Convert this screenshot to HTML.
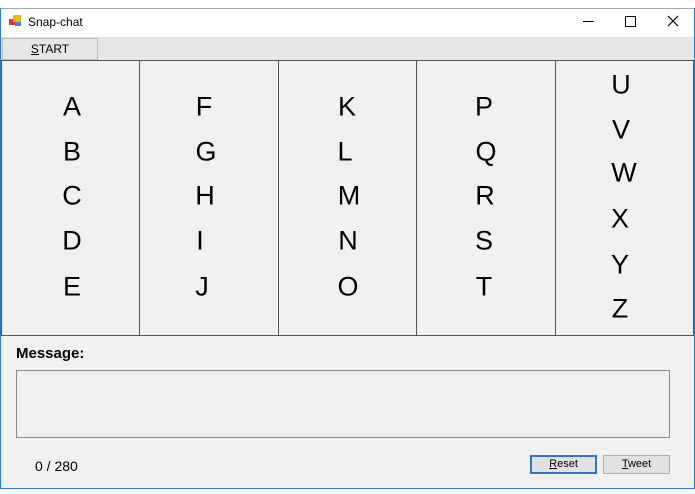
<!DOCTYPE html><html><head><style>
body{margin:0;width:695px;height:494px;background:#fff;position:relative;overflow:hidden;font-family:"Liberation Sans",sans-serif}
.a{position:absolute}
.win{left:0;top:8px;width:693px;height:479px;border:1px solid #2b78c8;border-top-color:#9ab;background:#f0f0f0}
.col{position:absolute;top:60px;height:276px;border:1px solid #555;box-sizing:border-box;background:#f0f0f0}
.L{position:absolute;font-size:27px;transform:translate(-50%,-50%);color:#000}
</style></head><body>
<div class="a win"></div>
<div class="a" style="left:1px;top:9px;width:693px;height:28px;background:#fff"></div>
<svg class="a" style="left:9px;top:14px" width="14" height="14"><rect x="0" y="5" width="6" height="6" fill="#d33"/><rect x="4" y="1" width="8" height="7" fill="#e8b800"/><rect x="6" y="8" width="6" height="4" fill="#48c"/></svg>
<div class="a" style="left:28px;top:15px;font-size:12px">Snap-chat</div>
<div class="a" style="left:583px;top:21px;width:11px;height:1px;background:#000"></div>
<div class="a" style="left:625px;top:16px;width:9px;height:9px;border:1px solid #000"></div>
<svg class="a" style="left:667px;top:15px" width="12" height="12"><path d="M1 1L11 11M11 1L1 11" stroke="#000" stroke-width="1.2"/></svg>
<div class="a" style="left:1px;top:37px;width:693px;height:23px;background:#e6e6e6;border-top:1px solid #ddd"></div>
<div class="a" style="left:2px;top:38px;width:94px;height:20px;border:1px solid #bbb;background:#e6e6e6;font-size:12px;text-align:center;line-height:20px"><u>S</u>TART</div>
<div class="col" style="left:1px;width:139px"></div>
<div class="col" style="left:139px;width:140px"></div>
<div class="col" style="left:278px;width:139px"></div>
<div class="col" style="left:416px;width:140px"></div>
<div class="col" style="left:555px;width:139px"></div>
<div class="L" style="left:72px;top:107px">A</div><div class="L" style="left:72px;top:152px">B</div><div class="L" style="left:72px;top:196px">C</div><div class="L" style="left:72px;top:241px">D</div><div class="L" style="left:72px;top:287px">E</div>
<div class="L" style="left:204px;top:107px">F</div><div class="L" style="left:206px;top:152px">G</div><div class="L" style="left:205px;top:196px">H</div><div class="L" style="left:200px;top:241px">I</div><div class="L" style="left:202px;top:287px">J</div>
<div class="L" style="left:347px;top:107px">K</div><div class="L" style="left:345px;top:152px">L</div><div class="L" style="left:349px;top:196px">M</div><div class="L" style="left:348px;top:241px">N</div><div class="L" style="left:348px;top:287px">O</div>
<div class="L" style="left:484px;top:107px">P</div><div class="L" style="left:486px;top:152px">Q</div><div class="L" style="left:485px;top:196px">R</div><div class="L" style="left:484px;top:241px">S</div><div class="L" style="left:484px;top:287px">T</div>
<div class="L" style="left:621px;top:85px">U</div><div class="L" style="left:621px;top:130px">V</div><div class="L" style="left:624px;top:173px">W</div><div class="L" style="left:620px;top:219px">X</div><div class="L" style="left:620px;top:265px">Y</div><div class="L" style="left:620px;top:309px">Z</div>
<div class="a" style="left:16px;top:345px;font-size:15px;font-weight:bold">Message:</div>
<div class="a" style="left:16px;top:370px;width:654px;height:68px;border:1px solid #888;box-sizing:border-box;background:#f0f0f0"></div>
<div class="a" style="left:35px;top:458px;font-size:14px">0 / 280</div>
<div class="a" style="left:530px;top:455px;width:67px;height:19px;border:1px solid #2b78c8;box-sizing:border-box;background:#e1e1e1;font-size:11px;text-align:center;line-height:17px;box-shadow:inset 0 0 0 1px #2b78c8"><u>R</u>eset</div>
<div class="a" style="left:603px;top:455px;width:67px;height:19px;border:1px solid #adadad;box-sizing:border-box;background:#e1e1e1;font-size:11px;text-align:center;line-height:17px"><u>T</u>weet</div>
</body></html>
